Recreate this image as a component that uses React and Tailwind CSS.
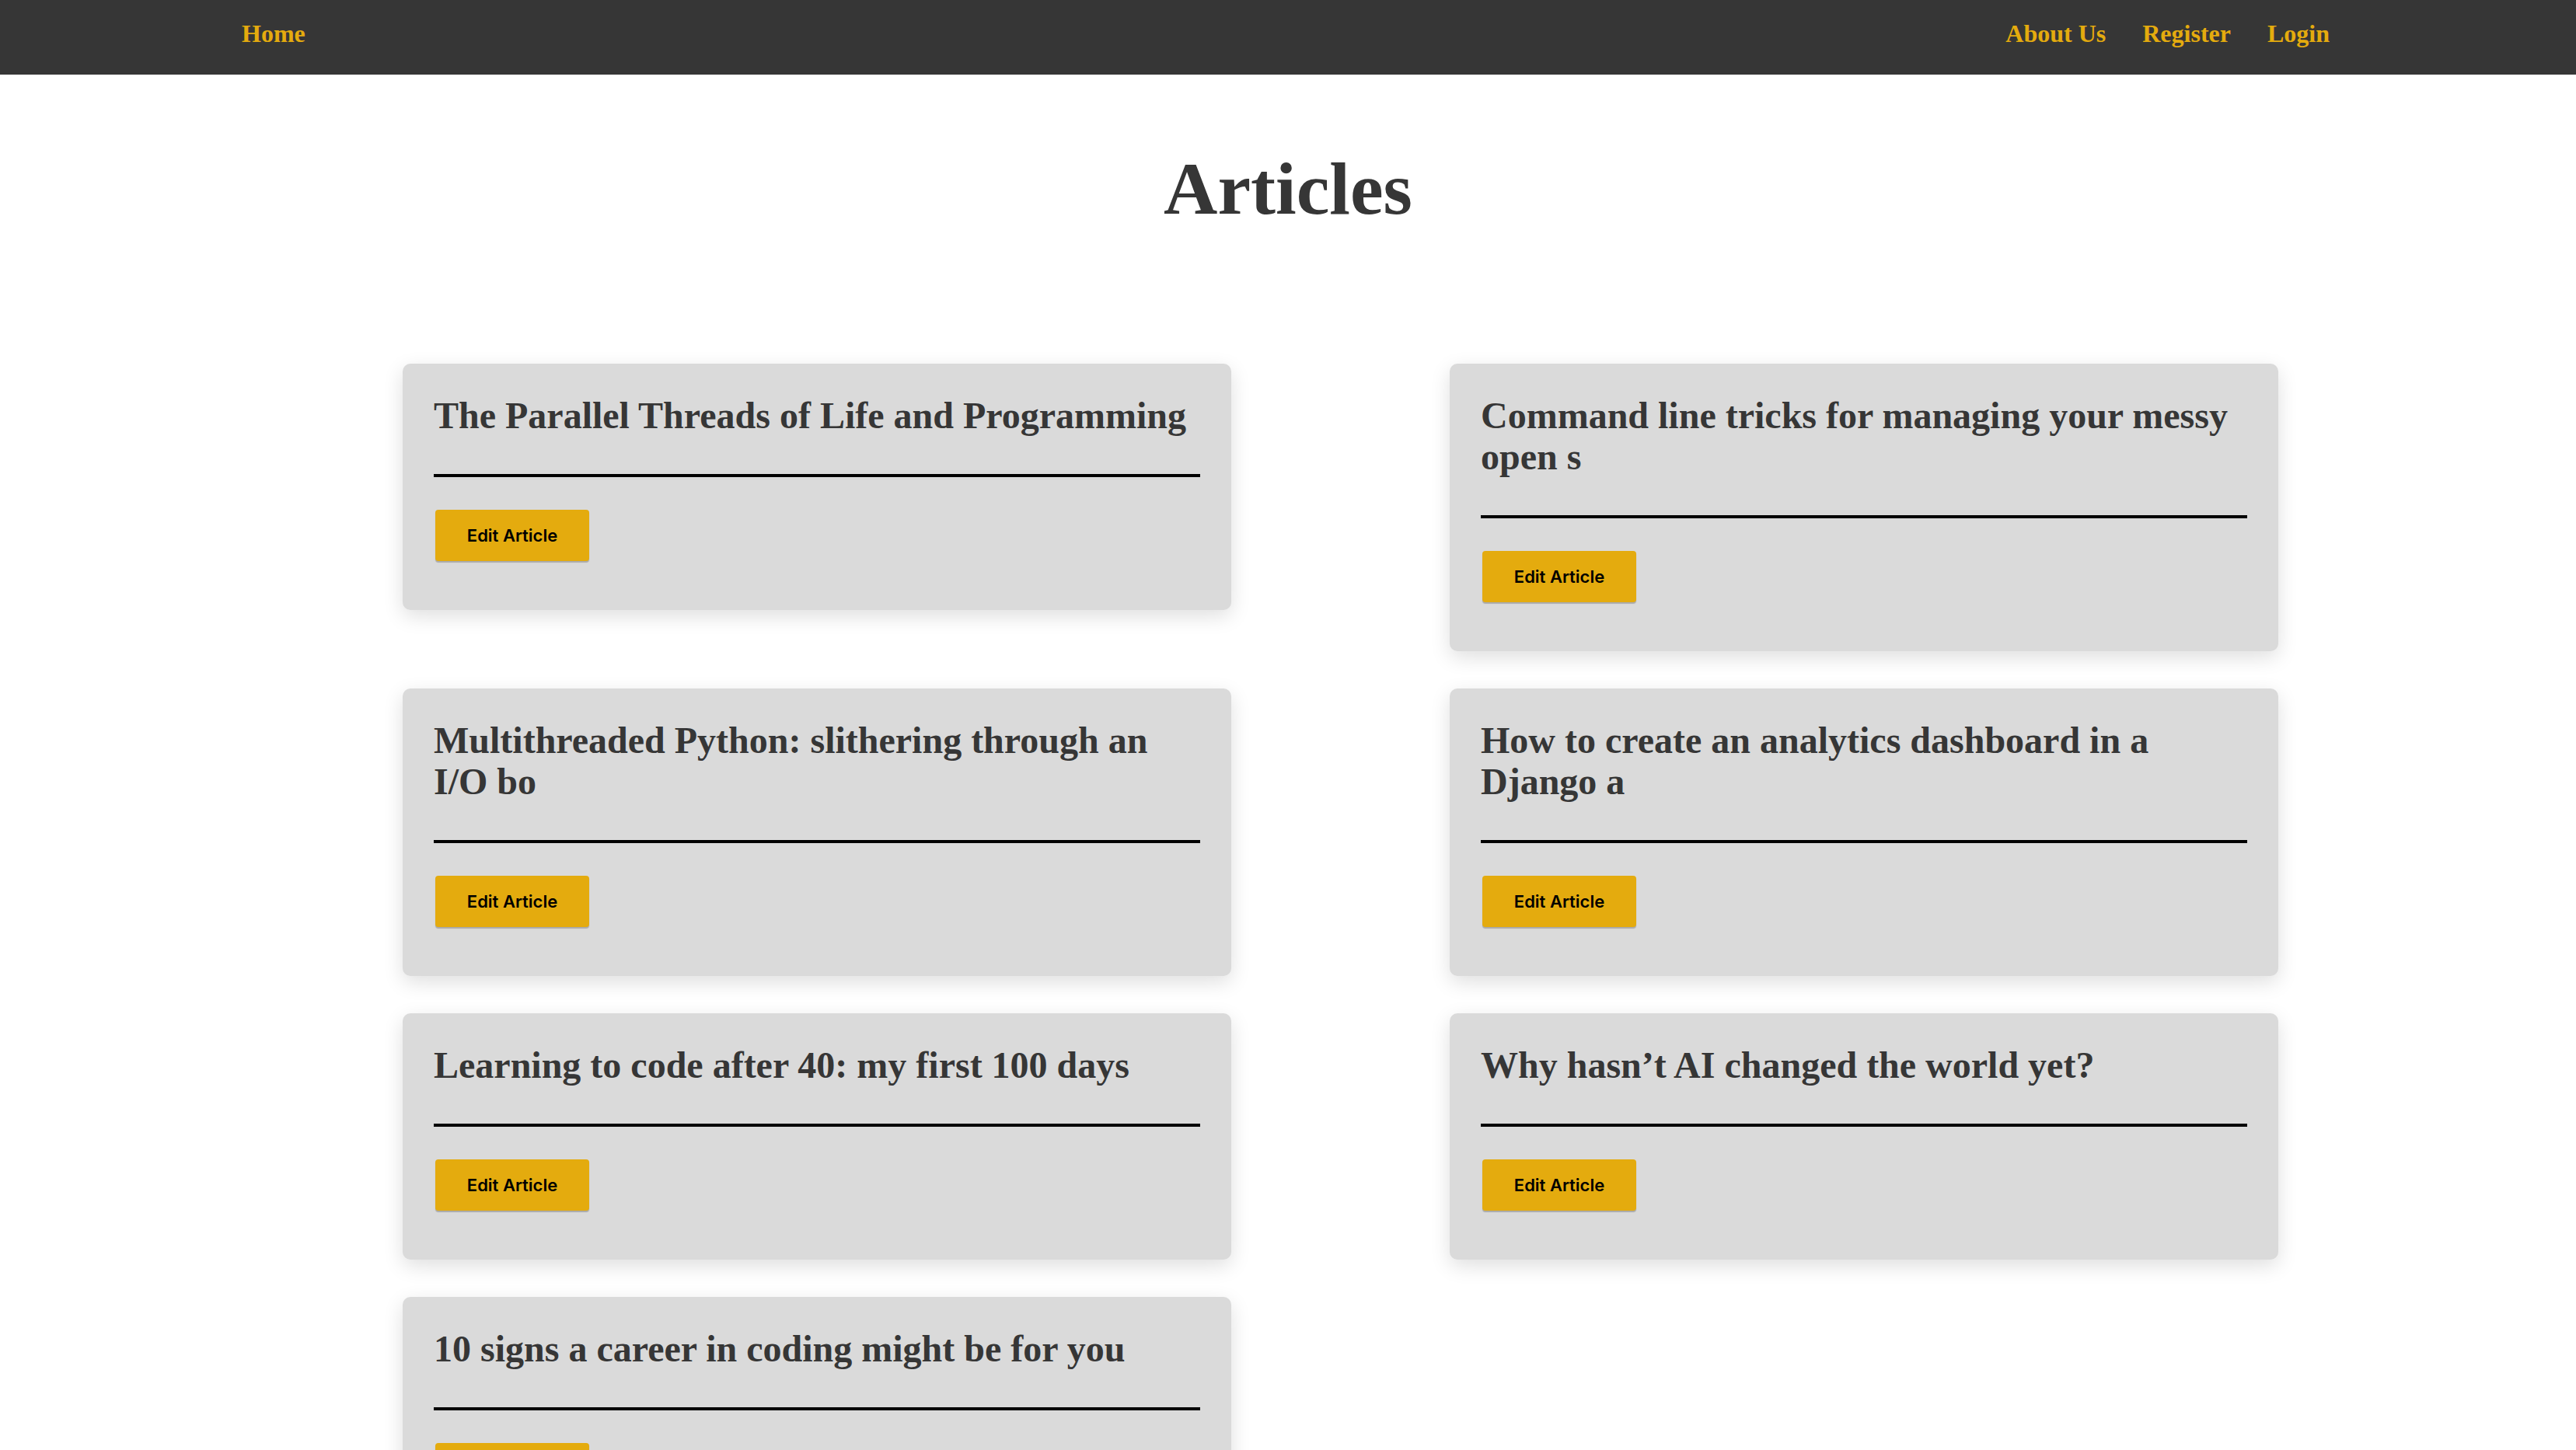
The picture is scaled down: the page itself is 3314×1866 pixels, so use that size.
import React from "react";

const articles = [
  { id: 1, title: "The Parallel Threads of Life and Programming" },
  { id: 2, title: "Command line tricks for managing your messy open s" },
  { id: 3, title: "Multithreaded Python: slithering through an I/O bo" },
  { id: 4, title: "How to create an analytics dashboard in a Django a" },
  { id: 5, title: "Learning to code after 40: my first 100 days" },
  { id: 6, title: "Why hasn’t AI changed the world yet?" },
  { id: 7, title: "10 signs a career in coding might be for you" },
];

const serif = "font-['Liberation_Serif','Times_New_Roman',serif]";

const NavBar = () => {
  return (
    <nav className={`h-[96px] bg-[#363636] pl-[311px] pr-[317px] pt-[23px] flex justify-between ${serif}`}>
      <a href="#" className="text-[32px] leading-[40px] font-bold text-[#e4ab0e]">
        Home
      </a>
      <div className="flex gap-x-[47px]">
        <a href="#" className="text-[32px] leading-[40px] font-bold text-[#e4ab0e]">
          About Us
        </a>
        <a href="#" className="text-[32px] leading-[40px] font-bold text-[#e4ab0e]">
          Register
        </a>
        <a href="#" className="text-[32px] leading-[40px] font-bold text-[#e4ab0e]">
          Login
        </a>
      </div>
    </nav>
  );
};

const ArticleCard = ({ article }) => {
  return (
    <div className="bg-[#dadada] rounded-[10px] px-[40px] pt-[40px] pb-[63px] shadow-[0_8px_26px_rgba(0,0,0,0.13)]">
      <h2 className={`${serif} text-[48px] leading-[53px] font-bold text-[#363636]`}>
        {article.title}
      </h2>
      <div className="mt-[49px] h-[4px] bg-black" />
      <button className="mt-[42px] ml-[2px] w-[198px] h-[66px] rounded-[4px] bg-[#e4ab0e] shadow-[0_2px_1px_rgba(0,0,0,0.22)] font-['Inter',sans-serif] text-[22px] font-semibold text-black">
        Edit Article
      </button>
    </div>
  );
};

export default function App() {
  return (
    <div className="min-h-screen bg-white">
      <NavBar />
      <h1 className={`${serif} mt-[92px] text-center text-[96px] leading-[110px] font-bold text-[#363636]`}>
        Articles
      </h1>
      {/* card grid */}
      <div className="mt-[170px] pl-[518px] pb-[60px] grid grid-cols-[1066px_1066px] gap-x-[281px] gap-y-[48px] items-start">
        {articles.map((article) => (
          <ArticleCard key={article.id} article={article} />
        ))}
      </div>
    </div>
  );
}
